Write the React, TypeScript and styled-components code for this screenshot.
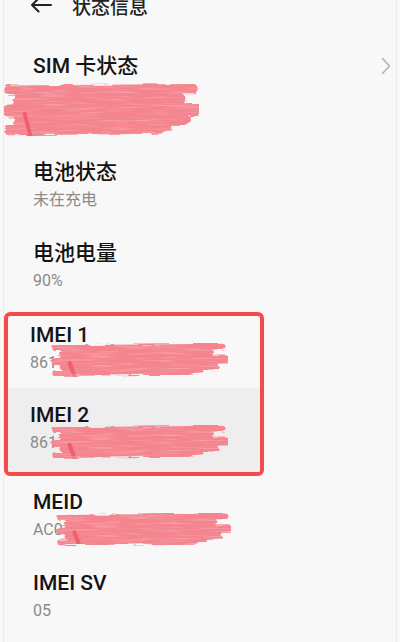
import React from 'react';
import styled, { createGlobalStyle } from 'styled-components';

const GlobalStyle = createGlobalStyle`
  html, body {
    margin: 0;
    padding: 0;
    background: #f8f8f8;
    overflow: hidden;
  }
  body {
    font-family: Roboto, "Noto Sans CJK SC", sans-serif;
  }
`;

const Screen = styled.div`
  width: 394px;
  height: 642px;
  margin: 0 3px;
  overflow: hidden;
  box-sizing: border-box;
  background: #f8f8f8;
  border-left: 1px solid #ececec;
  border-right: 1px solid #ececec;
`;

const Header = styled.header`
  height: 52px;
  margin-top: -21px;
  display: flex;
  align-items: center;
  padding-left: 26px;
  gap: 20px;
`;

const HeaderTitle = styled.h1`
  margin: 0;
  font-size: 19px;
  font-weight: 500;
  color: #222;
`;

const Row = styled.div<{ $pt?: number; $pb?: number; $pl?: number; $shade?: boolean }>`
  position: relative;
  display: flex;
  align-items: center;
  padding: ${p => p.$pt ?? 15}px 5px ${p => p.$pb ?? 15}px ${p => p.$pl ?? 29}px;
  background: ${p => (p.$shade ? '#eeeeee' : 'transparent')};
`;

const RowText = styled.div`
  flex: 1;
  display: flex;
  flex-direction: column;
  gap: 5px;
`;

const Title = styled.div`
  font-size: 21px;
  line-height: 26px;
  font-weight: 500;
  color: #141414;
`;

const Value = styled.div`
  font-size: 16px;
  line-height: 20px;
  color: #8a8a8a;
`;

const Highlight = styled.div`
  margin-top: 6px;
  width: 260px;
  box-sizing: border-box;
  border: 4px solid #f44a4a;
  border-radius: 6px;
  overflow: hidden;
`;

const ScribbleBox = styled.div`
  position: absolute;
  pointer-events: none;
`;

const Chevron = () => (
  <svg width="10" height="18" viewBox="0 0 10 18" fill="none">
    <path d="M1.5 1.5 L8.5 9 L1.5 16.5" stroke="#b4b4b4" strokeWidth="1.6" strokeLinecap="round" strokeLinejoin="round" />
  </svg>
);

const BackArrow = () => (
  <svg width="22" height="16" viewBox="0 0 22 16" fill="none">
    <path d="M21 8 H2 M8.5 1.5 L2 8 L8.5 14.5" stroke="#222" strokeWidth="2" strokeLinecap="round" strokeLinejoin="round" />
  </svg>
);

// pink brush-stroke that hides private numbers
const Scribble: React.FC<{ id: string; left: number; top: number; w: number; h: number }> = ({ id, left, top, w, h }) => {
  const streaks = [
    { y: 0.14, end: 0.97, sw: 0.16 },
    { y: 0.32, end: 0.9, sw: 0.22 },
    { y: 0.5, end: 0.99, sw: 0.22 },
    { y: 0.68, end: 0.93, sw: 0.2 },
    { y: 0.84, end: 0.8, sw: 0.16 },
  ];
  return (
    <ScribbleBox style={{ left, top, width: w, height: h }}>
      <svg width={w} height={h} viewBox={`0 0 ${w} ${h}`}>
        <defs>
          <filter id={`rough-${id}`} x="-5%" y="-20%" width="110%" height="140%">
            <feTurbulence type="fractalNoise" baseFrequency="0.05 0.4" numOctaves="2" seed="3" result="n" />
            <feDisplacementMap in="SourceGraphic" in2="n" scale="5" />
          </filter>
          <filter id={`grain-${id}`}>
            <feTurbulence type="fractalNoise" baseFrequency="0.03 0.6" numOctaves="2" seed="7" />
            <feColorMatrix values="0 0 0 0 1  0 0 0 0 1  0 0 0 0 1  0 0 0 1.3 -0.65" />
          </filter>
          <mask id={`m-${id}`}>
            <g filter={`url(#rough-${id})`}>
              <path
                d={`M${w * 0.07} ${h * 0.3} Q${w * 0.25} ${h * 0.12} ${w * 0.6} ${h * 0.12} L${w * 0.85} ${h * 0.12} L${w * 0.86} ${h * 0.82} Q${w * 0.4} ${h * 0.94} ${w * 0.13} ${h * 0.86} Q${w * 0.02} ${h * 0.6} ${w * 0.07} ${h * 0.3} Z`}
                fill="#fff"
              />
              {streaks.map((s, i) => (
                <line
                  key={i}
                  x1={w * (0.04 + (i % 2) * 0.05)}
                  y1={h * s.y}
                  x2={w * s.end}
                  y2={h * s.y - 1.5}
                  stroke="#fff"
                  strokeWidth={h * s.sw}
                  strokeLinecap="round"
                />
              ))}
            </g>
          </mask>
        </defs>
        <g mask={`url(#m-${id})`}>
          <rect x="0" y="0" width={w} height={h} fill="#f4858f" />
          <rect x="0" y="0" width={w} height={h} filter={`url(#grain-${id})`} opacity="0.55" />
          <path d={`M${w * 0.12} ${h * 0.55} L${w * 0.15} ${h * 0.95}`} stroke="#ee5664" strokeWidth="4" strokeLinecap="round" opacity="0.8" />
        </g>
      </svg>
    </ScribbleBox>
  );
};

const App: React.FC = () => {
  return (
    <>
      <GlobalStyle />
      <Screen>
        <Header>
          <BackArrow />
          <HeaderTitle>状态信息</HeaderTitle>
        </Header>

        <Row $pt={22} $pb={65}>
          <RowText>
            <Title>SIM 卡状态</Title>
          </RowText>
          <Chevron />
          <Scribble id="sim" left={-3} top={51} w={198} h={58} />
        </Row>

        <Row>
          <RowText>
            <Title>电池状态</Title>
            <Value>未在充电</Value>
          </RowText>
        </Row>

        <Row>
          <RowText>
            <Title>电池电量</Title>
            <Value>90%</Value>
          </RowText>
        </Row>

        <Highlight>
          <Row $pt={6} $pb={15} $pl={22}>
            <RowText>
              <Title>IMEI 1</Title>
              <Value>861</Value>
            </RowText>
            <Scribble id="imei1" left={40} top={27} w={180} h={36} />
          </Row>
          <Row $pt={14} $pb={19} $pl={22} $shade>
            <RowText>
              <Title>IMEI 2</Title>
              <Value>861</Value>
            </RowText>
            <Scribble id="imei2" left={40} top={37} w={180} h={36} />
          </Row>
        </Highlight>

        <Row $pt={13}>
          <RowText>
            <Title>MEID</Title>
            <Value>AC0</Value>
          </RowText>
          <Scribble id="meid" left={49} top={37} w={178} h={35} />
        </Row>

        <Row>
          <RowText>
            <Title>IMEI SV</Title>
            <Value>05</Value>
          </RowText>
        </Row>
      </Screen>
    </>
  );
};

export default App;
